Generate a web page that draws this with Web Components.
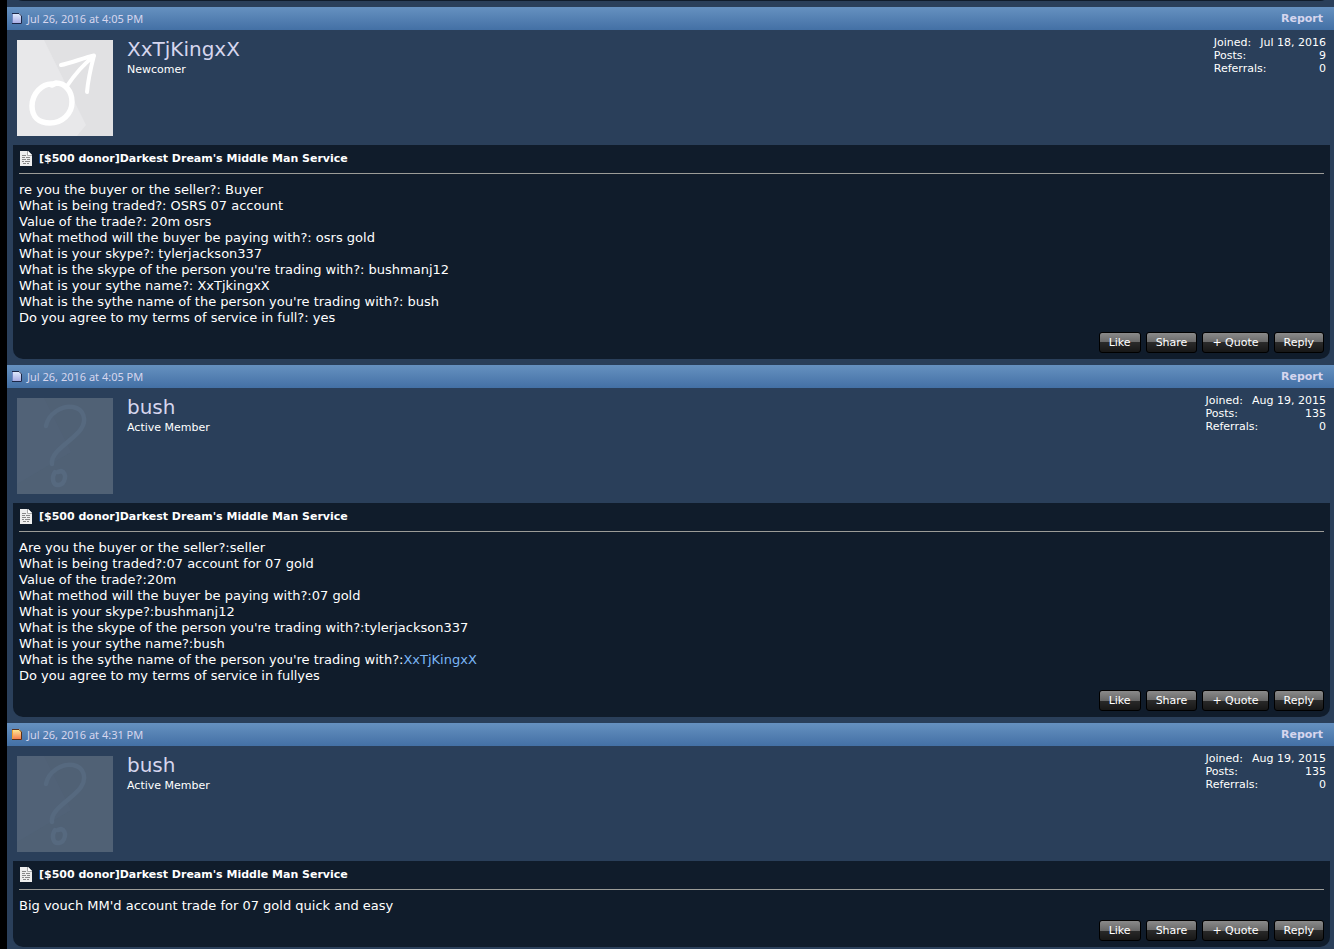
<!DOCTYPE html>
<html lang="en">
<head>
<meta charset="utf-8">
<title>Darkest Dream's Middle Man Service</title>
<style>
body { margin: 0; background: #000; color: #fff; font-family: "DejaVu Sans", Verdana, sans-serif; }
a { color: #7ab5f5; text-decoration: none; }
</style>
</head>
<body>
<post-list>
  <forum-post date="Jul 26, 2016 at 4:05 PM" author="XxTjKingxX" rank="Newcomer" avatar="male" joined="Jul 18, 2016" posts="9" referrals="0">re you the buyer or the seller?: Buyer<br>What is being traded?: OSRS 07 account<br>Value of the trade?: 20m osrs<br>What method will the buyer be paying with?: osrs gold<br>What is your skype?: tylerjackson337<br>What is the skype of the person you're trading with?: bushmanj12<br>What is your sythe name?: XxTjkingxX<br>What is the sythe name of the person you're trading with?: bush<br>Do you agree to my terms of service in full?: yes</forum-post>
  <forum-post date="Jul 26, 2016 at 4:05 PM" author="bush" rank="Active Member" avatar="unknown" joined="Aug 19, 2015" posts="135" referrals="0">Are you the buyer or the seller?:seller<br>What is being traded?:07 account for 07 gold<br>Value of the trade?:20m<br>What method will the buyer be paying with?:07 gold<br>What is your skype?:bushmanj12<br>What is the skype of the person you're trading with?:tylerjackson337<br>What is your sythe name?:bush<br>What is the sythe name of the person you're trading with?:<a href="#">XxTjKingxX</a><br>Do you agree to my terms of service in fullyes</forum-post>
  <forum-post unread date="Jul 26, 2016 at 4:31 PM" author="bush" rank="Active Member" avatar="unknown" joined="Aug 19, 2015" posts="135" referrals="0">Big vouch MM'd account trade for 07 gold quick and easy</forum-post>
</post-list>

<script>
class PostList extends HTMLElement {
  connectedCallback() {
    this.attachShadow({ mode: 'open' }).innerHTML = `
      <style>
        :host { display: block; margin-left: 7px; background: #2a3f5a; }
        .tail { display: flex; align-items: flex-end; height: 1px; overflow: hidden; padding: 0 4px 0 6px; margin-bottom: 6px; }
        .tail div { flex: 1; height: 20px; flex-shrink: 0; background: #101c2b; border-radius: 0 0 10px 10px; }
      </style>
      <div class="tail"><div></div></div>
      <slot></slot>`;
  }
}
customElements.define('post-list', PostList);

class StatusIcon extends HTMLElement {
  connectedCallback() {
    const unread = this.hasAttribute('unread');
    const [top, bottom, edge] = unread ? ['#fff39a', '#f5734a', '#5c3018'] : ['#e4f0ff', '#a3a6e0', '#1c2848'];
    this.attachShadow({ mode: 'open' }).innerHTML = `
      <style>:host, svg { display: block; }</style>
      <svg width="10" height="11" viewBox="0 0 10 11" aria-hidden="true">
        <defs><linearGradient id="g" x2="0" y2="1"><stop stop-color="${top}"/><stop offset="1" stop-color="${bottom}"/></linearGradient></defs>
        <path d="M0 0H7L10 3V11H0Z" fill="url(#g)"/>
        <path d="M.5 1V10" stroke="${unread ? '#f4a22c' : '#7188c4'}" fill="none"/>
        <path d="M0 .5H7L9.500 3V10.500H0" fill="none" stroke="${edge}"/>
      </svg>`;
  }
}
customElements.define('status-icon', StatusIcon);

class UserAvatar extends HTMLElement {
  connectedCallback() {
    const male = this.getAttribute('kind') === 'male';
    const art = male
      ? `<path d="M0 0H27L69 85L60 96H0Z" fill="#e8e8ea"/>
         <g fill="none" stroke="#fff" stroke-linecap="round" stroke-linejoin="round">
           <path d="M36 44C25 43 15 54 15 66C15 77 22 83 33 83C45 83 55 74 55 62C55 51 48 43 39 43L35 45" stroke-width="5.500"/>
           <path d="M50 46C56 37 67 24 77 16M44 25C54 23 66 18 77 15.500C74 27 71 40 70 52" stroke-width="4"/>
         </g>`
      : `<path d="M0 0H27L54 54L0 86Z" fill="#54687e" opacity=".25"/>
         <g fill="none" stroke="#56697f" stroke-width="4.500" stroke-linecap="round" stroke-linejoin="round">
           <path d="M29 28C31 16 45 7 56 9C67 11 70 22 64 31C57 42 33 53 35 66"/>
           <path d="M38 74C34 80 36 88 42 87C48 86 51 75 44 73L41 74"/>
         </g>`;
    this.attachShadow({ mode: 'open' }).innerHTML = `
      <style>:host, svg { display: block; }</style>
      <svg width="96" height="96" viewBox="0 0 96 96" role="img" aria-label="Avatar">
        <rect width="96" height="96" fill="${male ? '#e1e1e3' : '#506175'}"/>${art}
      </svg>`;
  }
}
customElements.define('user-avatar', UserAvatar);

class PostButton extends HTMLElement {
  connectedCallback() {
    this.attachShadow({ mode: 'open' }).innerHTML = `
      <style>
        :host { display: block; }
        button { display: block; box-sizing: border-box; height: 21px; margin: 0; padding: 0 9px; border: 1px solid #000; border-radius: 3px;
          background: linear-gradient(#8a8a8a, #686868 50%, #2a2a2a 50%, #171717); color: #fff; font: 11px/19px "DejaVu Sans", Verdana, sans-serif; white-space: nowrap; cursor: pointer; }
      </style>
      <button type="button"><slot></slot></button>`;
  }
}
customElements.define('post-button', PostButton);

class ForumPost extends HTMLElement {
  connectedCallback() {
    const v = name => this.getAttribute(name);
    this.attachShadow({ mode: 'open' }).innerHTML = `
      <style>
        :host { display: block; padding-bottom: 6px; font-size: 11px; line-height: 13px; }
        a { text-decoration: none; color: #d6d6ee; }
        .bar { display: flex; align-items: center; height: 23px; padding: 0 11px 0 5px; gap: 5px; background: linear-gradient(#6691c0, #4370a5); }
        time { flex: 1; color: #d6d6ee; font: 11px/13px "Noto Sans", Tahoma, sans-serif; }
        .bar a { font-weight: bold; }
        .user { display: flex; align-items: flex-start; gap: 14px; padding: 10px 8px 9px 10px; }
        .who { flex: 1; }
        h3 { margin: 0 0 5px; font-size: 20px; line-height: 18px; font-weight: normal; }
        p { margin: 0; }
        dl { margin: -4px 0 0; }
        dl div { display: flex; justify-content: space-between; gap: 9px; }
        dd { margin: 0; }
        .panel { margin: 0 4px 0 6px; padding: 6px; background: #101c2b; border-radius: 0 0 10px 10px; }
        h4 { display: flex; align-items: center; gap: 6px; margin: 0 0 8px; padding-bottom: 7px; border-bottom: 1px solid #9c9c98; font-size: 11px; line-height: 15px; }
        h4 a { color: #fff; }
        h4 svg { display: block; }
        .text { font-size: 13px; line-height: 16px; }
        .actions { display: flex; justify-content: flex-end; gap: 5px; padding-top: 6px; }
      </style>
      <div class="bar">
        <status-icon ${this.hasAttribute('unread') ? 'unread' : ''}></status-icon>
        <time>${v('date')}</time>
        <a href="#">Report</a>
      </div>
      <div class="user">
        <user-avatar kind="${v('avatar')}"></user-avatar>
        <div class="who"><h3><a href="#">${v('author')}</a></h3><p>${v('rank')}</p></div>
        <dl>
          <div><dt>Joined:</dt><dd>${v('joined')}</dd></div>
          <div><dt>Posts:</dt><dd>${v('posts')}</dd></div>
          <div><dt>Referrals:</dt><dd>${v('referrals')}</dd></div>
        </dl>
      </div>
      <div class="panel">
        <h4>
          <svg width="14" height="15" viewBox="0 0 14 15" aria-hidden="true">
            <path d="M1 0H9L13 4V15H1Z" fill="#eee"/>
            <path d="M9 0V4H13Z" fill="#fff"/><path d="M8.500 0V4.500H13" fill="none" stroke="#aaa"/>
            <path d="M3 4.500H7M3 6.500H6M7 6.500H11M3 8.500H7M8 8.500H11M3 10.500H5M6 10.500H11M4 12.500H7M8 12.500H10" stroke="#888"/>
          </svg>
          <a href="#">[$500 donor]Darkest Dream's Middle Man Service</a>
        </h4>
        <div class="text"><slot></slot></div>
        <div class="actions">
          <post-button>Like</post-button><post-button>Share</post-button><post-button>+ Quote</post-button><post-button>Reply</post-button>
        </div>
      </div>`;
  }
}
customElements.define('forum-post', ForumPost);
</script>
</body>
</html>
